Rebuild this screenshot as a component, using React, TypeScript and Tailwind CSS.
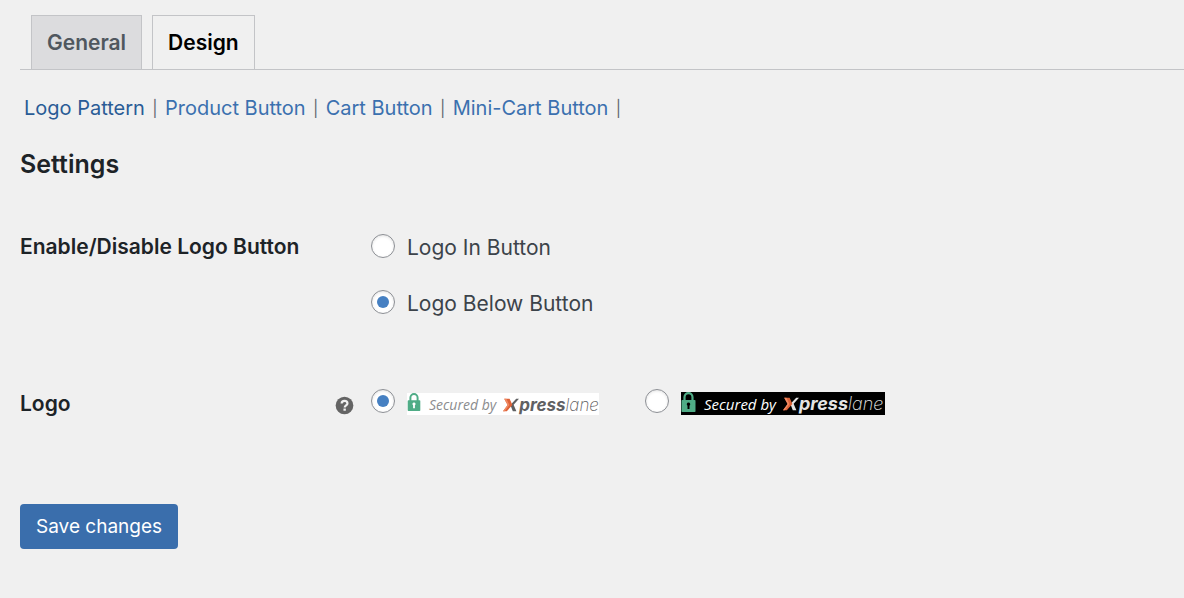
import type { ReactNode } from 'react';

const tabs = [
  { label: 'General', active: false },
  { label: 'Design', active: true },
];

const sections = ['Logo Pattern', 'Product Button', 'Cart Button', 'Mini-Cart Button'];

function Lock({ className }: { className: string }) {
  return (
    <svg viewBox="0 0 14 20" className={className} aria-hidden="true">
      <path d="M3 9V5.2a4 4 0 0 1 8 0V9" fill="none" stroke="#4fac86" strokeWidth="2.2" />
      <rect x="0" y="8" width="14" height="12" rx="0.8" fill="#4fac86" />
      <path d="M7 10.6a1.7 1.7 0 0 0-1 3.1V17h2v-3.3a1.7 1.7 0 0 0-1-3.1z" className="fill-current" />
    </svg>
  );
}

function XMark() {
  return (
    <svg viewBox="0 0 16 14" className="h-[14px] w-4 shrink-0" aria-hidden="true">
      <path d="M13.2 0.8H16L10.6 6.8l2.8 6.4H9.8L7.4 7z" className="fill-current" />
      <path d="M1.2 0.8h5.4L9.4 7l-5.6 6.2H0L4.6 7z" fill="#dd6238" />
      <path d="M1.2 0.8h2.2L6.4 7 1.8 13.2H0L4.6 7z" fill="#f08a63" />
    </svg>
  );
}

function SecuredLogo({ dark = false }: { dark?: boolean }) {
  return (
    <span
      className={
        dark
          ? "flex h-[23px] w-[204px] items-start overflow-hidden bg-black font-['Open_Sans',sans-serif] italic text-[#e4e4e4]"
          : "flex h-[22px] w-[192px] items-start overflow-hidden bg-white font-['Open_Sans',sans-serif] italic text-[#5f6062]"
      }
    >
      <span className={dark ? 'text-black' : 'text-white'}>
        <Lock className={dark ? 'h-5 w-[15px]' : 'h-[18px] w-[14px]'} />
      </span>
      <span
        className={
          dark
            ? 'ml-2 whitespace-nowrap text-[15px] leading-6 text-white'
            : 'ml-2 whitespace-nowrap text-[14px] leading-6 text-[#8b8c8e]'
        }
      >
        Secured by
      </span>
      <span className="ml-[7px] flex pt-[5px]">
        <XMark />
      </span>
      <span
        className={
          dark
            ? "whitespace-nowrap font-['Inter',sans-serif] text-[18px] leading-6"
            : "whitespace-nowrap font-['Inter',sans-serif] text-[17px] leading-6"
        }
      >
        <b className="font-bold">press</b>
        <span className="font-extralight">lane</span>
      </span>
    </span>
  );
}

function Radio({
  name,
  id,
  checked = false,
  children,
}: {
  name: string;
  id: string;
  checked?: boolean;
  children: ReactNode;
}) {
  return (
    <div className="flex items-start gap-3">
      <input
        type="radio"
        name={name}
        id={id}
        defaultChecked={checked}
        className="grid size-6 shrink-0 appearance-none place-content-center rounded-full border border-[#8c8f94] bg-white shadow-[inset_0_1px_3px_rgba(0,0,0,0.12)] before:size-3 before:rounded-full checked:before:bg-[#4680c2]"
      />
      <label htmlFor={id}>{children}</label>
    </div>
  );
}

export default function App() {
  return (
    <main className="min-h-screen bg-[#f0f0f0] pt-[15px] pb-12 pl-5 font-['Inter',sans-serif] text-[#3c434a]">
      <nav className="flex gap-[10px] border-b border-[#c3c4c7] pl-[11px]">
        {tabs.map((tab) => (
          <a
            key={tab.label}
            href="#"
            aria-current={tab.active ? 'page' : undefined}
            className={
              tab.active
                ? 'border border-b-0 border-[#c3c4c7] px-[15px] pt-[11px] pb-[10px] text-[21px] leading-8 font-semibold text-black'
                : 'border border-b-0 border-[#c3c4c7] bg-[#dcdcde] px-[15px] pt-[11px] pb-[10px] text-[21px] leading-8 font-semibold text-[#50575e]'
            }
          >
            {tab.label}
          </a>
        ))}
      </nav>

      <ul className="mt-6 flex pl-1 text-[20px] leading-7">
        {sections.map((section, index) => (
          <li key={section} className="flex">
            <a href="#" className={index === 0 ? 'text-[#2a5c96]' : 'text-[#3b70af]'}>
              {section}
            </a>
            <span className="w-5 text-center text-[16px] text-[#646970]">|</span>
          </li>
        ))}
      </ul>

      <form onSubmit={(event) => event.preventDefault()}>
        <h2 className="mt-6 text-[25px] leading-9 font-semibold text-[#1d2327]">Settings</h2>

        <fieldset className="mt-[49px] flex">
          <legend className="float-left w-[351px] text-[21px] leading-8 font-semibold text-[#1d2327]">
            Enable/Disable Logo Button
          </legend>
          <div className="flex flex-col gap-7 pt-[3px] text-[21px] leading-7">
            <Radio name="position" id="position-in">
              Logo In Button
            </Radio>
            <Radio name="position" id="position-below" checked>
              Logo Below Button
            </Radio>
          </div>
        </fieldset>

        <fieldset className="mt-[70px] flex">
          <legend className="float-left w-[315px] text-[21px] leading-8 font-semibold text-[#1d2327]">Logo</legend>
          <button type="button" aria-label="Help" className="mt-2 mr-[17px] size-[19px] shrink-0">
            <svg viewBox="0 0 20 20" className="size-full" aria-hidden="true">
              <circle cx="10" cy="10" r="9.3" fill="#646464" />
              <path
                d="M7 8c0-2 1.3-2.8 3-2.8s3.1 1 3.1 2.6c0 2-2.9 2.2-2.9 4.2"
                fill="none"
                stroke="#f0f0f0"
                strokeWidth="2.3"
              />
              <rect x="8.9" y="13.2" width="2.5" height="2.3" fill="#f0f0f0" />
            </svg>
          </button>
          <div className="flex gap-[46px] pt-[1px]">
            <Radio name="logo" id="logo-light" checked>
              <span className="flex pt-1">
                <SecuredLogo />
              </span>
            </Radio>
            <Radio name="logo" id="logo-dark">
              <span className="flex pt-[3px]">
                <SecuredLogo dark />
              </span>
            </Radio>
          </div>
        </fieldset>

        <button
          type="submit"
          className="mt-[84px] rounded bg-[#3a6eac] px-4 py-2 text-[19px] leading-[29px] text-white"
        >
          Save changes
        </button>
      </form>
    </main>
  );
}
